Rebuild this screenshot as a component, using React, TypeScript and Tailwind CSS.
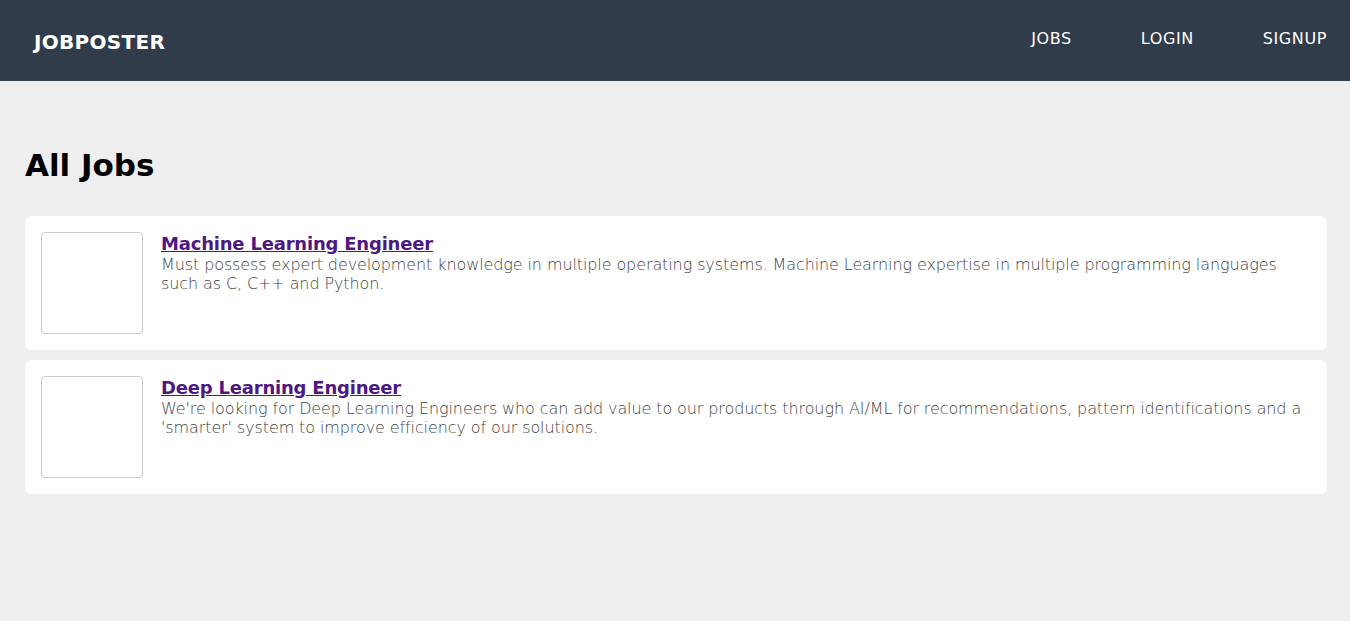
const jobs = [
  {
    id: 1,
    title: "Machine Learning Engineer",
    description:
      "Must possess expert development knowledge in multiple operating systems. Machine Learning expertise in multiple programming languages such as C, C++ and Python.",
  },
  {
    id: 2,
    title: "Deep Learning Engineer",
    description:
      "We're looking for Deep Learning Engineers who can add value to our products through AI/ML for recommendations, pattern identifications and a 'smarter' system to improve efficiency of our solutions.",
  },
];

const JobItem = ({ job }: { job: (typeof jobs)[number] }) => {
  return (
    <div className="flex gap-[18px] bg-white rounded-md p-4 h-[134px]">
      <div className="w-[102px] h-[102px] shrink-0 border border-[#cccccc] rounded-[4px]" />
      <div className="flex flex-col pt-[1px]">
        <a href="#" className="text-[18px] leading-[22px] font-bold text-[#4f1782] underline self-start tracking-[-0.2px]">
          {job.title}
        </a>
        <p className="text-[16px] leading-[19px] font-light text-[#444444] tracking-[-0.1px]">{job.description}</p>
      </div>
    </div>
  );
};

export default function App() {
  return (
    <div className="min-h-[621px] bg-[#eeeeee] font-['DejaVu_Sans',sans-serif]">
      <nav className="h-[81px] bg-[#313c4b] flex items-center justify-between pl-[34px] pr-[23px]">
        <span className="text-white font-bold text-[20px] tracking-[0.3px] pt-[2px]">JOBPOSTER</span>
        <div className="flex gap-[69px] text-white text-[16px] tracking-[0.6px] -mt-[4px]">
          <a href="#">JOBS</a>
          <a href="#">LOGIN</a>
          <a href="#">SIGNUP</a>
        </div>
      </nav>
      <main className="pl-[25px] pr-[23px] pt-[64px]">
        <h1 className="text-[31px] leading-[40px] font-bold text-black mb-[31px]">All Jobs</h1>
        <div className="flex flex-col gap-[10px]">
          {jobs.map((job) => (
            <JobItem key={job.id} job={job} />
          ))}
        </div>
      </main>
    </div>
  );
}
